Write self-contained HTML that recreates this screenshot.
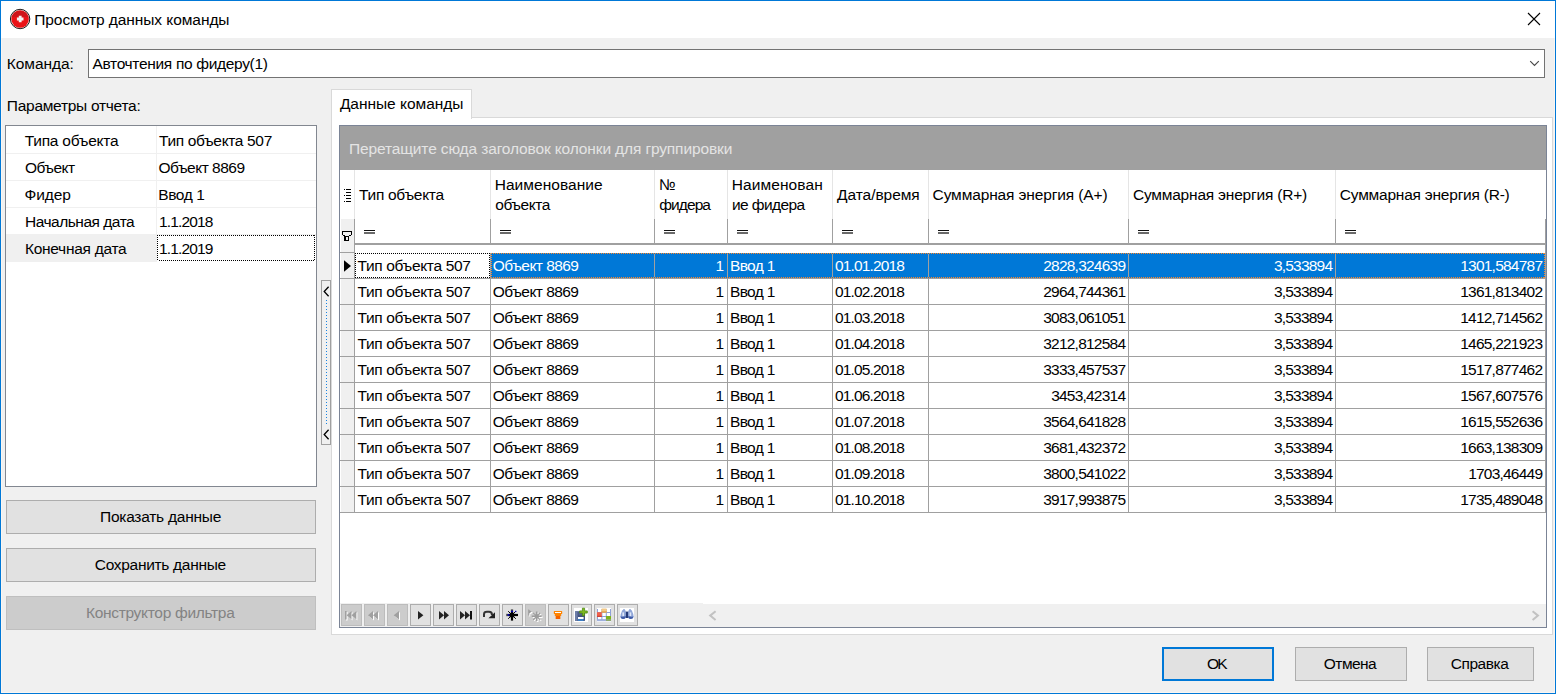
<!DOCTYPE html>
<html lang="ru"><head><meta charset="utf-8"><title>Просмотр данных команды</title>
<style>
html,body{margin:0;padding:0;}
body{width:1556px;height:694px;position:relative;overflow:hidden;background:#f0f0f0;font-family:"Liberation Sans", sans-serif;font-size:15.5px;}
.b{position:absolute;box-sizing:border-box;display:block;}
.t{position:absolute;white-space:nowrap;line-height:20px;height:20px;font-family:"Liberation Sans", sans-serif;font-size:15.5px;color:#000;}
.c{text-align:center;}
</style></head><body>
<div class="b" style="left:0px;top:0px;width:1556px;height:694px;background:#f0f0f0;border:1px solid #0078d7;"></div>
<div class="b" style="left:1px;top:1px;width:1554px;height:37px;background:#ffffff;"></div>
<div class="b" style="left:1px;top:38px;width:1554px;height:655px;border:1px solid #faf6f2;border-top:none;"></div>
<svg class="b" style="left:8px;top:7px" width="24" height="24" viewBox="0 0 24 24">
<circle cx="12.1" cy="12" r="9.7" fill="#f3dada" stroke="#1c1c1c" stroke-width="1"/>
<circle cx="12.1" cy="12" r="8.7" fill="#ea1216"/>
<path d="M3.9 10.2 A8.5 8.5 0 0 1 20.3 10.2 Q12 8.6 3.9 10.2 Z" fill="#c4161c" opacity="0.75"/>
<path d="M10.8 8.7h2.8v1.9h1.9v2.8h-1.9v1.9h-2.8v-1.9h-1.9v-2.8h1.9z" fill="#f3f3f3"/>
</svg>
<span class="t" id="t0" style="top:9.63px;color:#000;font-size:15.5px;letter-spacing:-0.064px;left:34.24px;">Просмотр данных команды</span>
<svg class="b" style="left:1527px;top:12px" width="14" height="14" viewBox="0 0 14 14">
<path d="M1 1 L13 13 M13 1 L1 13" stroke="#000" stroke-width="1.1" fill="none"/></svg>
<span class="t" id="t1" style="top:53.63px;color:#000;font-size:15.5px;letter-spacing:-0.053px;left:6.83px;">Команда:</span>
<div class="b" style="left:88px;top:49px;width:1457px;height:29px;background:#fff;border:1px solid #737373;"></div>
<span class="t" id="t2" style="top:53.63px;color:#000;font-size:15.5px;letter-spacing:-0.324px;left:92.47px;">Авточтения по фидеру(1)</span>
<svg class="b" style="left:1529px;top:60px" width="12" height="8" viewBox="0 0 12 8">
<path d="M1.2 1.2 L5.5 5.5 L9.8 1.2" stroke="#484848" stroke-width="1.15" fill="none"/></svg>
<span class="t" id="t3" style="top:95.63px;color:#000;font-size:15.5px;letter-spacing:-0.276px;left:6.84px;">Параметры отчета:</span>
<div class="b" style="left:5px;top:125px;width:312px;height:362px;background:#fff;border:1px solid #828790;"></div>
<div class="b" style="left:6px;top:153px;width:310px;height:1px;background:#f0f0f0"></div>
<div class="b" style="left:156px;top:126px;width:1px;height:28px;background:#f0f0f0"></div>
<span class="t" id="t4" style="top:130.63px;color:#000;font-size:15.5px;letter-spacing:-0.246px;left:24.75px;">Типа объекта</span>
<span class="t" id="t5" style="top:130.63px;color:#000;font-size:15.5px;letter-spacing:-0.341px;left:158.95px;">Тип объекта 507</span>
<div class="b" style="left:6px;top:180px;width:310px;height:1px;background:#f0f0f0"></div>
<div class="b" style="left:156px;top:153px;width:1px;height:28px;background:#f0f0f0"></div>
<span class="t" id="t6" style="top:157.63px;color:#000;font-size:15.5px;letter-spacing:-0.525px;left:24.97px;">Объект</span>
<span class="t" id="t7" style="top:157.63px;color:#000;font-size:15.5px;letter-spacing:-0.504px;left:158.47px;">Объект 8869</span>
<div class="b" style="left:6px;top:207px;width:310px;height:1px;background:#f0f0f0"></div>
<div class="b" style="left:156px;top:180px;width:1px;height:28px;background:#f0f0f0"></div>
<span class="t" id="t8" style="top:184.63px;color:#000;font-size:15.5px;letter-spacing:-0.146px;left:24.61px;">Фидер</span>
<span class="t" id="t9" style="top:184.63px;color:#000;font-size:15.5px;letter-spacing:-0.407px;left:158.23px;">Ввод 1</span>
<div class="b" style="left:6px;top:234px;width:310px;height:1px;background:#f0f0f0"></div>
<div class="b" style="left:156px;top:207px;width:1px;height:28px;background:#f0f0f0"></div>
<span class="t" id="t10" style="top:211.63px;color:#000;font-size:15.5px;letter-spacing:-0.479px;left:24.93px;">Начальная дата</span>
<span class="t" id="t11" style="top:211.63px;color:#000;font-size:15.5px;letter-spacing:-0.867px;left:159.00px;">1.1.2018</span>
<div class="b" style="left:6px;top:234px;width:151px;height:28px;background:#f0f0f0;"></div>
<div class="b" style="left:157px;top:235px;width:158px;height:1px;background:repeating-linear-gradient(to right,#000 0,#000 1px,#fff 1px,#fff 2px)"></div><div class="b" style="left:157px;top:260px;width:158px;height:1px;background:repeating-linear-gradient(to right,#000 0,#000 1px,#fff 1px,#fff 2px)"></div><div class="b" style="left:157px;top:235px;width:1px;height:26px;background:repeating-linear-gradient(to bottom,#000 0,#000 1px,#fff 1px,#fff 2px)"></div><div class="b" style="left:314px;top:235px;width:1px;height:26px;background:repeating-linear-gradient(to bottom,#000 0,#000 1px,#fff 1px,#fff 2px)"></div>
<span class="t" id="t12" style="top:238.63px;color:#000;font-size:15.5px;letter-spacing:-0.283px;left:24.93px;">Конечная дата</span>
<span class="t" id="t13" style="top:238.63px;color:#000;font-size:15.5px;letter-spacing:-0.867px;left:159.00px;">1.1.2019</span>
<div class="b" style="left:6px;top:500px;width:310px;height:34px;background:#e1e1e1;border:1px solid #adadad;"></div>
<span class="t" id="t14" style="top:506.63px;color:#000;font-size:15.5px;letter-spacing:-0.248px;left:100.04px;">Показать данные</span>
<div class="b" style="left:6px;top:548px;width:310px;height:34px;background:#e1e1e1;border:1px solid #adadad;"></div>
<span class="t" id="t15" style="top:554.63px;color:#000;font-size:15.5px;letter-spacing:-0.305px;left:94.81px;">Сохранить данные</span>
<div class="b" style="left:6px;top:596px;width:310px;height:34px;background:#cccccc;border:1px solid #bfbfbf;"></div>
<span class="t" id="t16" style="top:602.63px;color:#838383;font-size:15.5px;letter-spacing:-0.303px;left:85.93px;">Конструктор фильтра</span>
<div class="b" style="left:321px;top:280px;width:10px;height:165px;background:#f0f0f0;border:1px solid #a0a0a0;"></div>
<svg class="b" style="left:323px;top:286.2px" width="7" height="11" viewBox="0 0 7 11"><path d="M5.6 0.8 L1.2 5.5 L5.6 10.2" stroke="#000" stroke-width="1.3" fill="none"/></svg>
<svg class="b" style="left:323px;top:429.2px" width="7" height="11" viewBox="0 0 7 11"><path d="M5.6 0.8 L1.2 5.5 L5.6 10.2" stroke="#000" stroke-width="1.3" fill="none"/></svg>
<div class="b" style="left:326px;top:300px;width:1px;height:124px;background:repeating-linear-gradient(to bottom,#1883e0 0,#1883e0 1px,transparent 1px,transparent 3px)"></div>
<div class="b" style="left:331px;top:117px;width:1222px;height:518px;background:#fff;border:1px solid #d9d9d9;"></div>
<div class="b" style="left:331px;top:89px;width:141px;height:30px;background:#fff;border:1px solid #d9d9d9;border-bottom:none;"></div>
<span class="t" id="t17" style="top:93.63px;color:#000;font-size:15.5px;letter-spacing:-0.026px;left:339.89px;">Данные команды</span>
<div class="b" style="left:339px;top:125px;width:1208px;height:503px;background:#fff;border:1px solid #7b8496;"></div>
<div class="b" style="left:340px;top:126px;width:1206px;height:44px;background:#a0a0a0;"></div>
<span class="t" id="t18" style="top:138.63px;color:#e4e4e4;font-size:15.5px;letter-spacing:-0.130px;left:348.94px;">Перетащите сюда заголовок колонки для группировки</span>
<div class="b" style="left:354px;top:170px;width:1px;height:49px;background:#e5e5e5"></div>
<div class="b" style="left:490px;top:170px;width:1px;height:49px;background:#e5e5e5"></div>
<div class="b" style="left:654px;top:170px;width:1px;height:49px;background:#e5e5e5"></div>
<div class="b" style="left:727px;top:170px;width:1px;height:49px;background:#e5e5e5"></div>
<div class="b" style="left:832px;top:170px;width:1px;height:49px;background:#e5e5e5"></div>
<div class="b" style="left:928px;top:170px;width:1px;height:49px;background:#e5e5e5"></div>
<div class="b" style="left:1128px;top:170px;width:1px;height:49px;background:#e5e5e5"></div>
<div class="b" style="left:1335px;top:170px;width:1px;height:49px;background:#e5e5e5"></div>
<div class="b" style="left:341px;top:219px;width:13px;height:33px;background:#f0f0f0;"></div>
<div class="b" style="left:354px;top:219px;width:1px;height:25px;background:#a0a0a0"></div>
<div class="b" style="left:490px;top:219px;width:1px;height:25px;background:#a0a0a0"></div>
<div class="b" style="left:654px;top:219px;width:1px;height:25px;background:#a0a0a0"></div>
<div class="b" style="left:727px;top:219px;width:1px;height:25px;background:#a0a0a0"></div>
<div class="b" style="left:832px;top:219px;width:1px;height:25px;background:#a0a0a0"></div>
<div class="b" style="left:928px;top:219px;width:1px;height:25px;background:#a0a0a0"></div>
<div class="b" style="left:1128px;top:219px;width:1px;height:25px;background:#a0a0a0"></div>
<div class="b" style="left:1335px;top:219px;width:1px;height:25px;background:#a0a0a0"></div>
<div class="b" style="left:1545px;top:219px;width:1px;height:26px;background:#a0a0a0"></div>
<div class="b" style="left:354px;top:243px;width:1192px;height:2px;background:#a0a0a0"></div>
<span class="t" id="t19" style="top:184.63px;color:#000;font-size:15.5px;letter-spacing:-0.288px;left:359.05px;">Тип объекта</span>
<span class="t" id="t20" style="top:174.63px;color:#000;font-size:15.5px;letter-spacing:0.058px;left:494.63px;">Наименование</span>
<span class="t" id="t21" style="top:194.63px;color:#000;font-size:15.5px;letter-spacing:-0.459px;left:495.25px;">объекта</span>
<span class="t" id="t22" style="top:174.63px;color:#000;font-size:15.5px;left:658.78px;">№</span>
<span class="t" id="t23" style="top:194.63px;color:#000;font-size:15.5px;letter-spacing:-0.893px;left:659.15px;">фидера</span>
<span class="t" id="t24" style="top:174.63px;color:#000;font-size:15.5px;letter-spacing:0.089px;left:731.73px;">Наименован</span>
<span class="t" id="t25" style="top:194.63px;color:#000;font-size:15.5px;letter-spacing:-0.591px;left:731.93px;">ие фидера</span>
<span class="t" id="t26" style="top:184.63px;color:#000;font-size:15.5px;letter-spacing:-0.053px;left:837.09px;">Дата/время</span>
<span class="t" id="t27" style="top:184.63px;color:#000;font-size:15.5px;letter-spacing:-0.127px;left:932.61px;">Суммарная энергия (A+)</span>
<span class="t" id="t28" style="top:184.63px;color:#000;font-size:15.5px;letter-spacing:-0.201px;left:1132.91px;">Суммарная энергия (R+)</span>
<span class="t" id="t29" style="top:184.63px;color:#000;font-size:15.5px;letter-spacing:-0.220px;left:1339.81px;">Суммарная энергия (R-)</span>
<div class="b" style="left:346px;top:189px;width:5px;height:1px;background:#000"></div>
<div class="b" style="left:344px;top:189px;width:1px;height:1px;background:#000"></div>
<div class="b" style="left:346px;top:192px;width:5px;height:1px;background:#000"></div>
<div class="b" style="left:346px;top:195px;width:5px;height:1px;background:#000"></div>
<div class="b" style="left:344px;top:195px;width:1px;height:1px;background:#000"></div>
<div class="b" style="left:346px;top:198px;width:5px;height:1px;background:#000"></div>
<div class="b" style="left:346px;top:201px;width:5px;height:1px;background:#000"></div>
<div class="b" style="left:344px;top:201px;width:1px;height:1px;background:#000"></div>
<svg class="b" style="left:342px;top:231px" width="10" height="10" viewBox="0 0 10 10" shape-rendering="crispEdges">
<path d="M0 0h10v1h-10z M0 1h1v3h-1z M9 1h1v3h-1z M1 4h1v1h-1z M8 4h1v1h-1z M2 5h2v5h-2z M6 5h1v5h-1z M7 5h1v0h-1z M4 5h2v1h-2z M4 9h2v1h-2z" fill="#000"/><path d="M7 4h2v1h-2z M1 4h2v1h-2z" fill="#000"/></svg>
<div class="b" style="left:364px;top:230px;width:11px;height:1px;background:#111"></div>
<div class="b" style="left:364px;top:232px;width:11px;height:1px;background:#6a6a6a"></div>
<div class="b" style="left:364px;top:233px;width:11px;height:1px;background:#6a6a6a"></div>
<div class="b" style="left:500px;top:230px;width:11px;height:1px;background:#111"></div>
<div class="b" style="left:500px;top:232px;width:11px;height:1px;background:#6a6a6a"></div>
<div class="b" style="left:500px;top:233px;width:11px;height:1px;background:#6a6a6a"></div>
<div class="b" style="left:664px;top:230px;width:11px;height:1px;background:#111"></div>
<div class="b" style="left:664px;top:232px;width:11px;height:1px;background:#6a6a6a"></div>
<div class="b" style="left:664px;top:233px;width:11px;height:1px;background:#6a6a6a"></div>
<div class="b" style="left:737px;top:230px;width:11px;height:1px;background:#111"></div>
<div class="b" style="left:737px;top:232px;width:11px;height:1px;background:#6a6a6a"></div>
<div class="b" style="left:737px;top:233px;width:11px;height:1px;background:#6a6a6a"></div>
<div class="b" style="left:842px;top:230px;width:11px;height:1px;background:#111"></div>
<div class="b" style="left:842px;top:232px;width:11px;height:1px;background:#6a6a6a"></div>
<div class="b" style="left:842px;top:233px;width:11px;height:1px;background:#6a6a6a"></div>
<div class="b" style="left:938px;top:230px;width:11px;height:1px;background:#111"></div>
<div class="b" style="left:938px;top:232px;width:11px;height:1px;background:#6a6a6a"></div>
<div class="b" style="left:938px;top:233px;width:11px;height:1px;background:#6a6a6a"></div>
<div class="b" style="left:1138px;top:230px;width:11px;height:1px;background:#111"></div>
<div class="b" style="left:1138px;top:232px;width:11px;height:1px;background:#6a6a6a"></div>
<div class="b" style="left:1138px;top:233px;width:11px;height:1px;background:#6a6a6a"></div>
<div class="b" style="left:1345px;top:230px;width:11px;height:1px;background:#111"></div>
<div class="b" style="left:1345px;top:232px;width:11px;height:1px;background:#6a6a6a"></div>
<div class="b" style="left:1345px;top:233px;width:11px;height:1px;background:#6a6a6a"></div>
<div class="b" style="left:491px;top:253px;width:1054px;height:25px;background:#0078d7;"></div>
<div class="b" style="left:341px;top:253px;width:13px;height:25px;background:#f0f0f0;"></div>
<span class="t" id="t30" style="top:255.63px;color:#000;font-size:15.5px;letter-spacing:-0.334px;left:357.45px;">Тип объекта 507</span>
<span class="t" id="t31" style="top:255.63px;color:#fff;font-size:15.5px;letter-spacing:-0.544px;left:492.87px;">Объект 8869</span>
<span class="t" id="t32" style="top:255.63px;color:#fff;font-size:15.5px;letter-spacing:-0.720px;right:832.72px;">1</span>
<span class="t" id="t33" style="top:255.63px;color:#fff;font-size:15.5px;letter-spacing:-0.647px;left:730.03px;">Ввод 1</span>
<span class="t" id="t34" style="top:255.63px;color:#fff;font-size:15.5px;letter-spacing:-0.838px;left:834.90px;">01.01.2018</span>
<span class="t" id="t35" style="top:255.63px;color:#fff;font-size:15.5px;letter-spacing:-0.774px;right:430.77px;">2828,324639</span>
<span class="t" id="t36" style="top:255.63px;color:#fff;font-size:15.5px;letter-spacing:-0.794px;right:223.79px;">3,533894</span>
<span class="t" id="t37" style="top:255.63px;color:#fff;font-size:15.5px;letter-spacing:-0.774px;right:13.77px;">1301,584787</span>
<div class="b" style="left:341px;top:279px;width:13px;height:25px;background:#f0f0f0;"></div>
<span class="t" id="t38" style="top:281.63px;color:#000;font-size:15.5px;letter-spacing:-0.334px;left:357.45px;">Тип объекта 507</span>
<span class="t" id="t39" style="top:281.63px;color:#000;font-size:15.5px;letter-spacing:-0.544px;left:492.87px;">Объект 8869</span>
<span class="t" id="t40" style="top:281.63px;color:#000;font-size:15.5px;letter-spacing:-0.720px;right:832.72px;">1</span>
<span class="t" id="t41" style="top:281.63px;color:#000;font-size:15.5px;letter-spacing:-0.647px;left:730.03px;">Ввод 1</span>
<span class="t" id="t42" style="top:281.63px;color:#000;font-size:15.5px;letter-spacing:-0.838px;left:834.90px;">01.02.2018</span>
<span class="t" id="t43" style="top:281.63px;color:#000;font-size:15.5px;letter-spacing:-0.774px;right:430.77px;">2964,744361</span>
<span class="t" id="t44" style="top:281.63px;color:#000;font-size:15.5px;letter-spacing:-0.794px;right:223.79px;">3,533894</span>
<span class="t" id="t45" style="top:281.63px;color:#000;font-size:15.5px;letter-spacing:-0.774px;right:13.77px;">1361,813402</span>
<div class="b" style="left:341px;top:305px;width:13px;height:25px;background:#f0f0f0;"></div>
<span class="t" id="t46" style="top:307.63px;color:#000;font-size:15.5px;letter-spacing:-0.334px;left:357.45px;">Тип объекта 507</span>
<span class="t" id="t47" style="top:307.63px;color:#000;font-size:15.5px;letter-spacing:-0.544px;left:492.87px;">Объект 8869</span>
<span class="t" id="t48" style="top:307.63px;color:#000;font-size:15.5px;letter-spacing:-0.720px;right:832.72px;">1</span>
<span class="t" id="t49" style="top:307.63px;color:#000;font-size:15.5px;letter-spacing:-0.647px;left:730.03px;">Ввод 1</span>
<span class="t" id="t50" style="top:307.63px;color:#000;font-size:15.5px;letter-spacing:-0.838px;left:834.90px;">01.03.2018</span>
<span class="t" id="t51" style="top:307.63px;color:#000;font-size:15.5px;letter-spacing:-0.774px;right:430.77px;">3083,061051</span>
<span class="t" id="t52" style="top:307.63px;color:#000;font-size:15.5px;letter-spacing:-0.794px;right:223.79px;">3,533894</span>
<span class="t" id="t53" style="top:307.63px;color:#000;font-size:15.5px;letter-spacing:-0.774px;right:13.77px;">1412,714562</span>
<div class="b" style="left:341px;top:331px;width:13px;height:25px;background:#f0f0f0;"></div>
<span class="t" id="t54" style="top:333.63px;color:#000;font-size:15.5px;letter-spacing:-0.334px;left:357.45px;">Тип объекта 507</span>
<span class="t" id="t55" style="top:333.63px;color:#000;font-size:15.5px;letter-spacing:-0.544px;left:492.87px;">Объект 8869</span>
<span class="t" id="t56" style="top:333.63px;color:#000;font-size:15.5px;letter-spacing:-0.720px;right:832.72px;">1</span>
<span class="t" id="t57" style="top:333.63px;color:#000;font-size:15.5px;letter-spacing:-0.647px;left:730.03px;">Ввод 1</span>
<span class="t" id="t58" style="top:333.63px;color:#000;font-size:15.5px;letter-spacing:-0.838px;left:834.90px;">01.04.2018</span>
<span class="t" id="t59" style="top:333.63px;color:#000;font-size:15.5px;letter-spacing:-0.774px;right:430.77px;">3212,812584</span>
<span class="t" id="t60" style="top:333.63px;color:#000;font-size:15.5px;letter-spacing:-0.794px;right:223.79px;">3,533894</span>
<span class="t" id="t61" style="top:333.63px;color:#000;font-size:15.5px;letter-spacing:-0.774px;right:13.77px;">1465,221923</span>
<div class="b" style="left:341px;top:357px;width:13px;height:25px;background:#f0f0f0;"></div>
<span class="t" id="t62" style="top:359.63px;color:#000;font-size:15.5px;letter-spacing:-0.334px;left:357.45px;">Тип объекта 507</span>
<span class="t" id="t63" style="top:359.63px;color:#000;font-size:15.5px;letter-spacing:-0.544px;left:492.87px;">Объект 8869</span>
<span class="t" id="t64" style="top:359.63px;color:#000;font-size:15.5px;letter-spacing:-0.720px;right:832.72px;">1</span>
<span class="t" id="t65" style="top:359.63px;color:#000;font-size:15.5px;letter-spacing:-0.647px;left:730.03px;">Ввод 1</span>
<span class="t" id="t66" style="top:359.63px;color:#000;font-size:15.5px;letter-spacing:-0.838px;left:834.90px;">01.05.2018</span>
<span class="t" id="t67" style="top:359.63px;color:#000;font-size:15.5px;letter-spacing:-0.774px;right:430.77px;">3333,457537</span>
<span class="t" id="t68" style="top:359.63px;color:#000;font-size:15.5px;letter-spacing:-0.794px;right:223.79px;">3,533894</span>
<span class="t" id="t69" style="top:359.63px;color:#000;font-size:15.5px;letter-spacing:-0.774px;right:13.77px;">1517,877462</span>
<div class="b" style="left:341px;top:383px;width:13px;height:25px;background:#f0f0f0;"></div>
<span class="t" id="t70" style="top:385.63px;color:#000;font-size:15.5px;letter-spacing:-0.334px;left:357.45px;">Тип объекта 507</span>
<span class="t" id="t71" style="top:385.63px;color:#000;font-size:15.5px;letter-spacing:-0.544px;left:492.87px;">Объект 8869</span>
<span class="t" id="t72" style="top:385.63px;color:#000;font-size:15.5px;letter-spacing:-0.720px;right:832.72px;">1</span>
<span class="t" id="t73" style="top:385.63px;color:#000;font-size:15.5px;letter-spacing:-0.647px;left:730.03px;">Ввод 1</span>
<span class="t" id="t74" style="top:385.63px;color:#000;font-size:15.5px;letter-spacing:-0.838px;left:834.90px;">01.06.2018</span>
<span class="t" id="t75" style="top:385.63px;color:#000;font-size:15.5px;letter-spacing:-0.779px;right:430.78px;">3453,42314</span>
<span class="t" id="t76" style="top:385.63px;color:#000;font-size:15.5px;letter-spacing:-0.794px;right:223.79px;">3,533894</span>
<span class="t" id="t77" style="top:385.63px;color:#000;font-size:15.5px;letter-spacing:-0.774px;right:13.77px;">1567,607576</span>
<div class="b" style="left:341px;top:409px;width:13px;height:25px;background:#f0f0f0;"></div>
<span class="t" id="t78" style="top:411.63px;color:#000;font-size:15.5px;letter-spacing:-0.334px;left:357.45px;">Тип объекта 507</span>
<span class="t" id="t79" style="top:411.63px;color:#000;font-size:15.5px;letter-spacing:-0.544px;left:492.87px;">Объект 8869</span>
<span class="t" id="t80" style="top:411.63px;color:#000;font-size:15.5px;letter-spacing:-0.720px;right:832.72px;">1</span>
<span class="t" id="t81" style="top:411.63px;color:#000;font-size:15.5px;letter-spacing:-0.647px;left:730.03px;">Ввод 1</span>
<span class="t" id="t82" style="top:411.63px;color:#000;font-size:15.5px;letter-spacing:-0.838px;left:834.90px;">01.07.2018</span>
<span class="t" id="t83" style="top:411.63px;color:#000;font-size:15.5px;letter-spacing:-0.774px;right:430.77px;">3564,641828</span>
<span class="t" id="t84" style="top:411.63px;color:#000;font-size:15.5px;letter-spacing:-0.794px;right:223.79px;">3,533894</span>
<span class="t" id="t85" style="top:411.63px;color:#000;font-size:15.5px;letter-spacing:-0.774px;right:13.77px;">1615,552636</span>
<div class="b" style="left:341px;top:435px;width:13px;height:25px;background:#f0f0f0;"></div>
<span class="t" id="t86" style="top:437.63px;color:#000;font-size:15.5px;letter-spacing:-0.334px;left:357.45px;">Тип объекта 507</span>
<span class="t" id="t87" style="top:437.63px;color:#000;font-size:15.5px;letter-spacing:-0.544px;left:492.87px;">Объект 8869</span>
<span class="t" id="t88" style="top:437.63px;color:#000;font-size:15.5px;letter-spacing:-0.720px;right:832.72px;">1</span>
<span class="t" id="t89" style="top:437.63px;color:#000;font-size:15.5px;letter-spacing:-0.647px;left:730.03px;">Ввод 1</span>
<span class="t" id="t90" style="top:437.63px;color:#000;font-size:15.5px;letter-spacing:-0.838px;left:834.90px;">01.08.2018</span>
<span class="t" id="t91" style="top:437.63px;color:#000;font-size:15.5px;letter-spacing:-0.774px;right:430.77px;">3681,432372</span>
<span class="t" id="t92" style="top:437.63px;color:#000;font-size:15.5px;letter-spacing:-0.794px;right:223.79px;">3,533894</span>
<span class="t" id="t93" style="top:437.63px;color:#000;font-size:15.5px;letter-spacing:-0.774px;right:13.77px;">1663,138309</span>
<div class="b" style="left:341px;top:461px;width:13px;height:25px;background:#f0f0f0;"></div>
<span class="t" id="t94" style="top:463.63px;color:#000;font-size:15.5px;letter-spacing:-0.334px;left:357.45px;">Тип объекта 507</span>
<span class="t" id="t95" style="top:463.63px;color:#000;font-size:15.5px;letter-spacing:-0.544px;left:492.87px;">Объект 8869</span>
<span class="t" id="t96" style="top:463.63px;color:#000;font-size:15.5px;letter-spacing:-0.720px;right:832.72px;">1</span>
<span class="t" id="t97" style="top:463.63px;color:#000;font-size:15.5px;letter-spacing:-0.647px;left:730.03px;">Ввод 1</span>
<span class="t" id="t98" style="top:463.63px;color:#000;font-size:15.5px;letter-spacing:-0.838px;left:834.90px;">01.09.2018</span>
<span class="t" id="t99" style="top:463.63px;color:#000;font-size:15.5px;letter-spacing:-0.774px;right:430.77px;">3800,541022</span>
<span class="t" id="t100" style="top:463.63px;color:#000;font-size:15.5px;letter-spacing:-0.794px;right:223.79px;">3,533894</span>
<span class="t" id="t101" style="top:463.63px;color:#000;font-size:15.5px;letter-spacing:-0.779px;right:13.78px;">1703,46449</span>
<div class="b" style="left:341px;top:487px;width:13px;height:25px;background:#f0f0f0;"></div>
<span class="t" id="t102" style="top:489.63px;color:#000;font-size:15.5px;letter-spacing:-0.334px;left:357.45px;">Тип объекта 507</span>
<span class="t" id="t103" style="top:489.63px;color:#000;font-size:15.5px;letter-spacing:-0.544px;left:492.87px;">Объект 8869</span>
<span class="t" id="t104" style="top:489.63px;color:#000;font-size:15.5px;letter-spacing:-0.720px;right:832.72px;">1</span>
<span class="t" id="t105" style="top:489.63px;color:#000;font-size:15.5px;letter-spacing:-0.647px;left:730.03px;">Ввод 1</span>
<span class="t" id="t106" style="top:489.63px;color:#000;font-size:15.5px;letter-spacing:-0.838px;left:834.90px;">01.10.2018</span>
<span class="t" id="t107" style="top:489.63px;color:#000;font-size:15.5px;letter-spacing:-0.774px;right:430.77px;">3917,993875</span>
<span class="t" id="t108" style="top:489.63px;color:#000;font-size:15.5px;letter-spacing:-0.794px;right:223.79px;">3,533894</span>
<span class="t" id="t109" style="top:489.63px;color:#000;font-size:15.5px;letter-spacing:-0.774px;right:13.77px;">1735,489048</span>
<div class="b" style="left:340px;top:252px;width:15px;height:1px;background:#a0a0a0"></div>
<div class="b" style="left:340px;top:278px;width:1206px;height:1px;background:#a0a0a0"></div>
<div class="b" style="left:340px;top:304px;width:1206px;height:1px;background:#a0a0a0"></div>
<div class="b" style="left:340px;top:330px;width:1206px;height:1px;background:#a0a0a0"></div>
<div class="b" style="left:340px;top:356px;width:1206px;height:1px;background:#a0a0a0"></div>
<div class="b" style="left:340px;top:382px;width:1206px;height:1px;background:#a0a0a0"></div>
<div class="b" style="left:340px;top:408px;width:1206px;height:1px;background:#a0a0a0"></div>
<div class="b" style="left:340px;top:434px;width:1206px;height:1px;background:#a0a0a0"></div>
<div class="b" style="left:340px;top:460px;width:1206px;height:1px;background:#a0a0a0"></div>
<div class="b" style="left:340px;top:486px;width:1206px;height:1px;background:#a0a0a0"></div>
<div class="b" style="left:340px;top:512px;width:1206px;height:1px;background:#a0a0a0"></div>
<div class="b" style="left:354px;top:219px;width:1px;height:294px;background:#a0a0a0"></div>
<div class="b" style="left:490px;top:253px;width:1px;height:260px;background:#a0a0a0"></div>
<div class="b" style="left:654px;top:253px;width:1px;height:260px;background:#a0a0a0"></div>
<div class="b" style="left:727px;top:253px;width:1px;height:260px;background:#a0a0a0"></div>
<div class="b" style="left:832px;top:253px;width:1px;height:260px;background:#a0a0a0"></div>
<div class="b" style="left:928px;top:253px;width:1px;height:260px;background:#a0a0a0"></div>
<div class="b" style="left:1128px;top:253px;width:1px;height:260px;background:#a0a0a0"></div>
<div class="b" style="left:1335px;top:253px;width:1px;height:260px;background:#a0a0a0"></div>
<div class="b" style="left:1545px;top:245px;width:1px;height:268px;background:#a0a0a0"></div>
<div class="b" style="left:355px;top:253px;width:135px;height:1px;background:repeating-linear-gradient(to right,#000 0,#000 1px,#fff 1px,#fff 2px)"></div><div class="b" style="left:355px;top:277px;width:135px;height:1px;background:repeating-linear-gradient(to right,#000 0,#000 1px,#fff 1px,#fff 2px)"></div><div class="b" style="left:355px;top:253px;width:1px;height:25px;background:repeating-linear-gradient(to bottom,#000 0,#000 1px,#fff 1px,#fff 2px)"></div><div class="b" style="left:489px;top:253px;width:1px;height:25px;background:repeating-linear-gradient(to bottom,#000 0,#000 1px,#fff 1px,#fff 2px)"></div>
<div class="b" style="left:491px;top:253px;width:1054px;height:1px;background:repeating-linear-gradient(to right,#ff8728 0,#ff8728 1px,#0078d7 1px,#0078d7 2px)"></div><div class="b" style="left:491px;top:277px;width:1054px;height:1px;background:repeating-linear-gradient(to right,#ff8728 0,#ff8728 1px,#0078d7 1px,#0078d7 2px)"></div><div class="b" style="left:491px;top:253px;width:1px;height:25px;background:repeating-linear-gradient(to bottom,#ff8728 0,#ff8728 1px,#0078d7 1px,#0078d7 2px)"></div><div class="b" style="left:1544px;top:253px;width:1px;height:25px;background:repeating-linear-gradient(to bottom,#ff8728 0,#ff8728 1px,#0078d7 1px,#0078d7 2px)"></div>
<svg class="b" style="left:344px;top:259.5px" width="8" height="12" viewBox="0 0 8 12"><path d="M0 0.2 L7 6 L0 11.8 Z" fill="#000"/></svg>
<div class="b" style="left:340px;top:603px;width:363px;height:24px;background:#f0f0f0;"></div>
<div class="b" style="left:703px;top:604px;width:843px;height:23px;background:#f0f0f0;"></div>
<div class="b" style="left:341px;top:604px;width:21px;height:22px;background:#cccccc;border:1px solid #bcbcbc"></div>
<svg class="b" style="left:341px;top:604px" width="21" height="22" viewBox="0 0 21 22"><g transform="translate(1,1)" fill="#ffffff"><rect x="4" y="7" width="1.6" height="8.5"/><path d="M5.6 11.25 L10.5 7 V15.5 Z"/><path d="M10.5 11.25 L15.4 7 V15.5 Z"/></g><g fill="#a0a0a0"><rect x="4" y="7" width="1.6" height="8.5"/><path d="M5.6 11.25 L10.5 7 V15.5 Z"/><path d="M10.5 11.25 L15.4 7 V15.5 Z"/></g></svg>
<div class="b" style="left:364px;top:604px;width:21px;height:22px;background:#cccccc;border:1px solid #bcbcbc"></div>
<svg class="b" style="left:364px;top:604px" width="21" height="22" viewBox="0 0 21 22"><g transform="translate(1,1)" fill="#ffffff"><path d="M4 11.25 L9 7 V15.5 Z"/><path d="M9 11.25 L14 7 V15.5 Z"/></g><g fill="#a0a0a0"><path d="M4 11.25 L9 7 V15.5 Z"/><path d="M9 11.25 L14 7 V15.5 Z"/></g></svg>
<div class="b" style="left:387px;top:604px;width:21px;height:22px;background:#cccccc;border:1px solid #bcbcbc"></div>
<svg class="b" style="left:387px;top:604px" width="21" height="22" viewBox="0 0 21 22"><g transform="translate(1,1)" fill="#ffffff"><path d="M6.7 11.25 L12 7 V15.5 Z"/></g><g fill="#a0a0a0"><path d="M6.7 11.25 L12 7 V15.5 Z"/></g></svg>
<div class="b" style="left:410px;top:604px;width:21px;height:22px;background:#e1e1e1;border:1px solid #adadad"></div>
<svg class="b" style="left:410px;top:604px" width="21" height="22" viewBox="0 0 21 22"><path d="M8 7 L13.4 11.25 L8 15.5 Z" fill="#222"/></svg>
<div class="b" style="left:433px;top:604px;width:21px;height:22px;background:#e1e1e1;border:1px solid #adadad"></div>
<svg class="b" style="left:433px;top:604px" width="21" height="22" viewBox="0 0 21 22"><path d="M6 7 L11 11.25 L6 15.5 Z M11 7 L16 11.25 L11 15.5 Z" fill="#222"/></svg>
<div class="b" style="left:456px;top:604px;width:21px;height:22px;background:#e1e1e1;border:1px solid #adadad"></div>
<svg class="b" style="left:456px;top:604px" width="21" height="22" viewBox="0 0 21 22"><path d="M4 7 L9 11.25 L4 15.5 Z M9 7 L14 11.25 L9 15.5 Z" fill="#222"/><rect x="14" y="7" width="2" height="8.5" fill="#111"/></svg>
<div class="b" style="left:479px;top:604px;width:21px;height:22px;background:#e1e1e1;border:1px solid #adadad"></div>
<svg class="b" style="left:479px;top:604px" width="21" height="22" viewBox="0 0 21 22"><path d="M5 13 V10.2 Q5 7.8 8 7.8 H10 Q13 7.8 13 11" fill="none" stroke="#333" stroke-width="2"/><path d="M16 8.2 V14.3 H9.4 Z" fill="#222"/></svg>
<div class="b" style="left:502px;top:604px;width:21px;height:22px;background:#e1e1e1;border:1px solid #adadad"></div>
<svg class="b" style="left:502px;top:604px" width="21" height="22" viewBox="0 0 21 22"><path d="M10 5.4 V16.6" stroke="#000" stroke-width="2.2"/><path d="M4 11 H16" stroke="#000" stroke-width="2.2"/><path d="M6.2 7.2 L13.8 14.8 M13.8 7.2 L6.2 14.8" stroke="#000" stroke-width="1"/><circle cx="10" cy="11" r="2.6" fill="#000"/><rect x="9" y="6.6" width="2" height="1.6" fill="#0000b0"/><rect x="5.6" y="10" width="1.8" height="2" fill="#0000b0"/><rect x="13.1" y="6.8" width="1.3" height="1.3" fill="#0000b0"/><rect x="9.2" y="5" width="1.6" height="1.4" fill="#888"/><rect x="4" y="10.2" width="1.5" height="1.6" fill="#888"/></svg>
<div class="b" style="left:525px;top:604px;width:21px;height:22px;background:#cccccc;border:1px solid #bcbcbc"></div>
<svg class="b" style="left:525px;top:604px" width="21" height="22" viewBox="0 0 21 22"><g transform="translate(1,1)" fill="#fff" color="#fff"><path d="M3.2 5.4 V11.6 H4.2 V9.4 L6.8 7.6 L4.2 5.9 V5.4 Z"/><path d="M11.7 7.6 V17 M6.8 12.3 H16.6" stroke-width="1.6" stroke="currentColor"/><path d="M8.2 8.8 L15.2 15.8 M15.2 8.8 L8.2 15.8" stroke-width="1.1" stroke="currentColor"/><circle cx="11.7" cy="12.3" r="2.2"/></g><g fill="#9c9c9c" color="#9c9c9c"><path d="M3.2 5.4 V11.6 H4.2 V9.4 L6.8 7.6 L4.2 5.9 V5.4 Z"/><path d="M11.7 7.6 V17 M6.8 12.3 H16.6" stroke-width="1.6" stroke="currentColor"/><path d="M8.2 8.8 L15.2 15.8 M15.2 8.8 L8.2 15.8" stroke-width="1.1" stroke="currentColor"/><circle cx="11.7" cy="12.3" r="2.2"/></g></svg>
<div class="b" style="left:548px;top:604px;width:21px;height:22px;background:#e1e1e1;border:1px solid #adadad"></div>
<svg class="b" style="left:548px;top:604px" width="21" height="22" viewBox="0 0 21 22"><path d="M6.4 6.9 H13.6 Q14.2 6.9 14.2 7.5 V9.4 Q14.2 10 13.6 10 H13.2 V11.9 H12.2 V15 H7.8 V11.9 H6.8 V10 H6.4 Q5.8 10 5.8 9.4 V7.5 Q5.8 6.9 6.4 6.9 Z" fill="#ff8400"/><path d="M7.8 11.9 H12.2 V15 H7.8 Z" fill="#f46200"/><rect x="7" y="8" width="6" height="1" fill="#fff"/></svg>
<div class="b" style="left:571px;top:604px;width:21px;height:22px;background:#e1e1e1;border:1px solid #adadad"></div>
<svg class="b" style="left:571px;top:604px" width="21" height="22" viewBox="0 0 21 22"><rect x="3" y="4" width="14" height="14" fill="#fff"/><rect x="4" y="7.2" width="10" height="9.8" rx="0.8" fill="#3f4f7d"/><rect x="4" y="7.2" width="2.6" height="9.8" fill="#6d7ea6"/><rect x="7" y="13" width="5.6" height="2" fill="#fff"/><rect x="7" y="15" width="5.6" height="2" fill="#3d7fc4"/><rect x="7.4" y="8" width="4" height="3.4" fill="#55648f"/><path d="M11.4 4.2 H13.6 V6.9 H16.3 V9.1 H13.6 V11.8 H11.4 V9.1 H8.7 V6.9 H11.4 Z" fill="#7fb820" stroke="#4c8a12" stroke-width="0.8"/></svg>
<div class="b" style="left:594px;top:604px;width:21px;height:22px;background:#e1e1e1;border:1px solid #adadad"></div>
<svg class="b" style="left:594px;top:604px" width="21" height="22" viewBox="0 0 21 22"><rect x="3" y="4" width="14" height="14" fill="#fff"/><g stroke="#8da0d6" stroke-width="1" fill="none"><path d="M3.5 5 V17 M7.9 5 V17 M12.3 5 V17 M16.5 5 V17"/><path d="M3 8.5 H17 M3 12.5 H17 M3 15.8 H17"/></g><rect x="3" y="15.6" width="14" height="1.6" fill="#9fb0dc"/><rect x="7.4" y="4.6" width="5.4" height="3.8" rx="0.6" fill="#f3c987"/><rect x="7.4" y="7.4" width="5.4" height="1.2" fill="#e39a3c"/><rect x="3" y="8.2" width="4.8" height="4.6" fill="#f0604a"/><rect x="3" y="11.8" width="4.8" height="1" fill="#c9382c"/><rect x="12" y="12" width="5" height="3.6" fill="#7db21c"/><rect x="12" y="15.6" width="5" height="1.4" fill="#8ca86a"/></svg>
<div class="b" style="left:617px;top:604px;width:21px;height:22px;background:#e1e1e1;border:1px solid #adadad"></div>
<svg class="b" style="left:617px;top:604px" width="21" height="22" viewBox="0 0 21 22"><rect x="3" y="4" width="14" height="14" fill="#fff"/><rect x="8.4" y="7.6" width="3.2" height="6.4" fill="#243a78"/><path d="M4.6 8 Q4.8 6.2 6 6 V5.2 H8 V6 Q8.8 6.4 8.8 8 V13 Q8.6 15 6.2 15 Q3.4 15 3.4 12.6 Q3.4 10 4.6 8 Z" fill="#8fa6d8"/><path d="M11.2 8 Q11.2 6.4 12 6 V5.2 H14 V6 Q15.2 6.2 15.4 8 Q16.6 10 16.6 12.6 Q16.6 15 13.8 15 Q11.4 15 11.2 13 Z" fill="#8fa6d8"/><path d="M3.6 12.6 Q3.6 14.9 6.2 14.9 Q8.6 14.9 8.7 13 L8.7 12 Q6 13.4 3.6 12.2 Z" fill="#3f5ca8"/><path d="M16.4 12.6 Q16.4 14.9 13.8 14.9 Q11.4 14.9 11.3 13 L11.3 12 Q14 13.4 16.4 12.2 Z" fill="#3f5ca8"/><rect x="5.4" y="8.4" width="1.6" height="3.6" fill="#dfe7f7"/><rect x="12.6" y="8.4" width="1.6" height="3.6" fill="#dfe7f7"/></svg>
<svg class="b" style="left:706px;top:608px" width="14" height="15" viewBox="0 0 14 15"><path d="M9.6 3.2 L4.2 7.6 L9.6 12" stroke="#c2c2c2" stroke-width="2" fill="none"/></svg>
<svg class="b" style="left:1528px;top:608px" width="14" height="15" viewBox="0 0 14 15"><path d="M4.6 3.2 L10 7.6 L4.6 12" stroke="#c2c2c2" stroke-width="2" fill="none"/></svg>
<div class="b" style="left:1162px;top:647px;width:112px;height:34px;background:#e1e1e1;border:2px solid #0078d7;"></div>
<div class="b" style="left:1295px;top:647px;width:112px;height:34px;background:#e1e1e1;border:1px solid #adadad;"></div>
<div class="b" style="left:1427px;top:647px;width:107px;height:34px;background:#e1e1e1;border:1px solid #adadad;"></div>
<span class="t" id="t110" style="top:653.63px;color:#000;font-size:15.5px;letter-spacing:-1.687px;left:1206.97px;">OK</span>
<span class="t" id="t111" style="top:653.63px;color:#000;font-size:15.5px;letter-spacing:-0.556px;left:1323.87px;">Отмена</span>
<span class="t" id="t112" style="top:653.63px;color:#000;font-size:15.5px;letter-spacing:-0.429px;left:1450.71px;">Справка</span>
</body></html>
